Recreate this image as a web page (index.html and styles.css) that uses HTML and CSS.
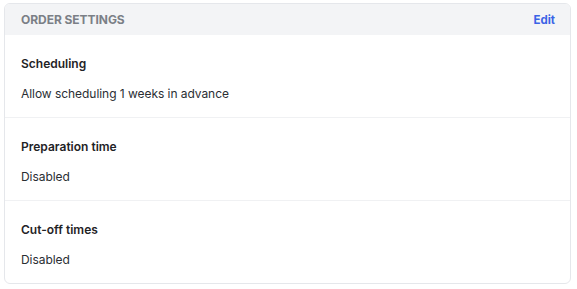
FILE: index.html
```html
<!DOCTYPE html>
<html>
<head>
<meta charset="utf-8">
<link rel="stylesheet" href="styles.css">
</head>
<body>
<div class="card">
  <div class="card-header">
    <span class="card-title">ORDER SETTINGS</span>
    <a class="edit" href="#">Edit</a>
  </div>
  <div class="section">
    <div class="section-title">Scheduling</div>
    <div class="section-value">Allow scheduling 1 weeks in advance</div>
  </div>
  <div class="section">
    <div class="section-title">Preparation time</div>
    <div class="section-value">Disabled</div>
  </div>
  <div class="section">
    <div class="section-title">Cut-off times</div>
    <div class="section-value">Disabled</div>
  </div>
</div>
</body>
</html>
```
FILE: styles.css
```css
* { box-sizing: border-box; }
html, body { margin: 0; background: #ffffff; }
body {
  padding: 3px 6px 0 4px;
  font-family: Inter, "Noto Sans", sans-serif;
  color: #1f2937;
}
.card {
  border: 1px solid #e5e7eb;
  border-radius: 6px;
  overflow: hidden;
  background: #fff;
}
.card-header {
  display: flex;
  align-items: center;
  justify-content: space-between;
  height: 31px;
  padding: 0 15px 0 16px;
  background: #f3f4f6;
}
.card-title {
  font-size: 12px;
  font-weight: 700;
  color: #7b7f86;
  letter-spacing: -0.05px;
}
.edit {
  font-size: 11.5px;
  font-weight: 700;
  color: #3b63e6;
  text-decoration: none;
}
.section {
  padding: 21px 16px 15px;
  border-bottom: 1px solid #f0f1f3;
}
.section:last-child { border-bottom: none; }
.section-title {
  font-size: 12px;
  font-weight: 600;
  line-height: 16px;
  color: #1f2326;
  margin-bottom: 14px;
}
.section-value {
  font-size: 12px;
  line-height: 16px;
  color: #2a2e33;
  letter-spacing: -0.05px;
}
```
